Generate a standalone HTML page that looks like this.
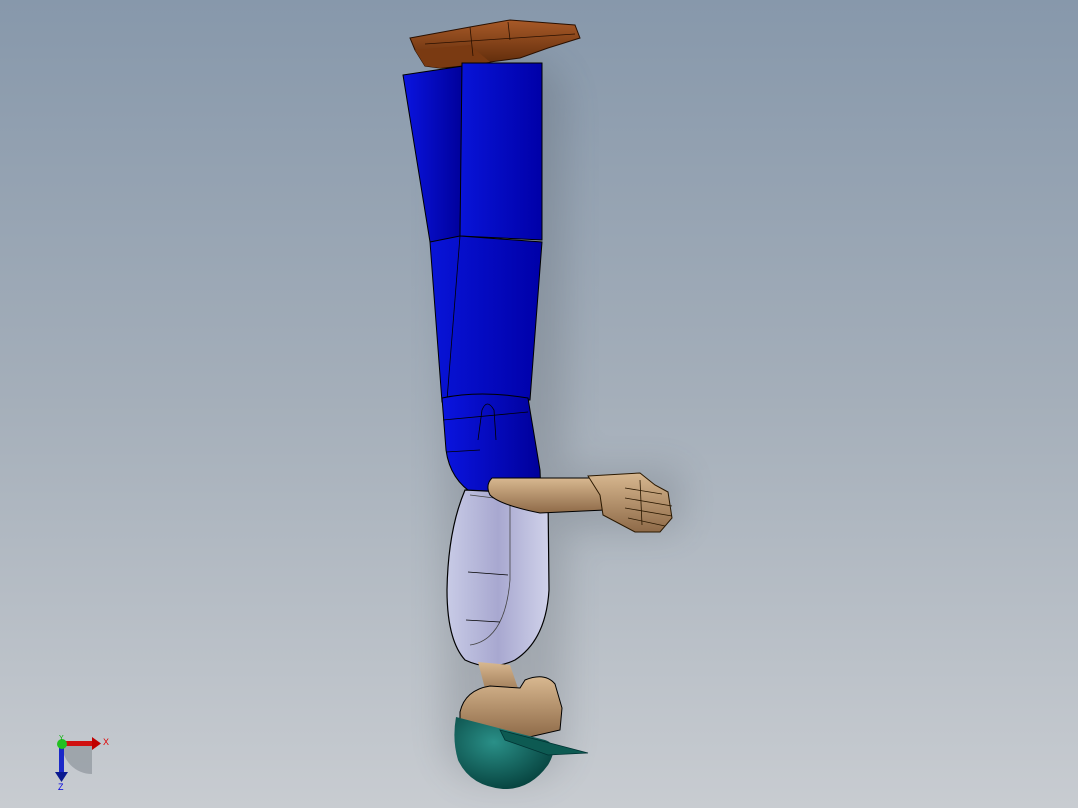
<!DOCTYPE html>
<html><head><meta charset="utf-8"><style>
html,body{margin:0;padding:0;width:1078px;height:808px;overflow:hidden}
body{background:linear-gradient(#8798ab 0%,#a5afba 50%,#c8ccd1 100%)}
</style></head><body>
<svg width="1078" height="808" viewBox="0 0 1078 808" xmlns="http://www.w3.org/2000/svg">
<defs>
<linearGradient id="blue" x1="0" x2="1"><stop offset="0" stop-color="#0a14e0"/><stop offset="1" stop-color="#00009a"/></linearGradient>
<linearGradient id="blue2" x1="0" x2="1"><stop offset="0" stop-color="#0814d8"/><stop offset="1" stop-color="#0000a8"/></linearGradient>
<linearGradient id="lav" x1="0" x2="1"><stop offset="0" stop-color="#c8cbe6"/><stop offset="0.5" stop-color="#a8a8d0"/><stop offset="1" stop-color="#d0d2ea"/></linearGradient>
<linearGradient id="tan" x1="0" y1="0" x2="0" y2="1"><stop offset="0" stop-color="#d8b890"/><stop offset="1" stop-color="#8e6a48"/></linearGradient>
<radialGradient id="teal" cx="0.4" cy="0.35" r="0.7"><stop offset="0" stop-color="#2a9088"/><stop offset="1" stop-color="#05403c"/></radialGradient>
<linearGradient id="brown" x1="0" y1="0" x2="0" y2="1"><stop offset="0" stop-color="#a85a28"/><stop offset="1" stop-color="#5a2808"/></linearGradient>
<filter id="sh" x="-50%" y="-20%" width="200%" height="140%"><feGaussianBlur stdDeviation="18"/></filter>
</defs>
<g opacity="0.18" filter="url(#sh)"><rect x="445" y="60" width="120" height="720" rx="40" fill="#303840"/><rect x="540" y="470" width="140" height="60" fill="#303840"/></g>
<!-- shoes -->
<polygon points="410,38 470,27 510,20 575,25 580,38 548,48 520,58 490,62 470,66 440,68 425,66 415,50" fill="url(#brown)" stroke="#2a1000" stroke-width="1"/>
<polygon points="415,50 470,45 490,62 440,68 425,66" fill="#7a3a12"/>
<line x1="425" y1="44" x2="575" y2="34" stroke="#2a1000" stroke-width="0.8"/>
<line x1="470" y1="27" x2="473" y2="56" stroke="#2a1000" stroke-width="0.8"/>
<line x1="508" y1="22" x2="510" y2="40" stroke="#2a1000" stroke-width="0.8"/>
<!-- legs -->
<polygon points="403,75 463,66 460,240 430,242" fill="url(#blue)" stroke="#000" stroke-width="1"/>
<polygon points="462,63 542,63 542,240 460,236" fill="url(#blue2)" stroke="#000" stroke-width="1"/>
<polygon points="430,242 460,236 542,242 530,400 442,402" fill="url(#blue2)" stroke="#000" stroke-width="1"/>
<line x1="460" y1="236" x2="447" y2="400" stroke="#000" stroke-width="0.8"/>
<!-- hips -->
<path d="M442,398 Q480,390 528,398 L540,470 L541,495 L475,495 Q450,480 446,450 Z" fill="url(#blue)" stroke="#000" stroke-width="1"/>
<path d="M478,440 L482,410 Q487,398 494,410 L496,440" fill="none" stroke="#000" stroke-width="0.8"/>
<line x1="443" y1="420" x2="528" y2="412" stroke="#000" stroke-width="0.8"/>
<line x1="446" y1="452" x2="480" y2="450" stroke="#000" stroke-width="0.8"/>
<!-- torso -->
<path d="M465,490 L548,494 L549,590 Q546,640 515,660 Q490,672 465,660 Q447,640 447,590 Q448,530 465,490 Z" fill="url(#lav)" stroke="#000" stroke-width="1.2"/>
<path d="M470,495 L510,500 L510,580 Q505,640 470,645" fill="none" stroke="#444" stroke-width="0.8"/>
<line x1="468" y1="572" x2="508" y2="575" stroke="#000" stroke-width="0.8"/>
<line x1="466" y1="620" x2="500" y2="622" stroke="#000" stroke-width="0.8"/>
<!-- arm -->
<path d="M492,478 L590,478 Q615,490 605,510 L540,513 Q500,505 490,495 Q485,485 492,478 Z" fill="url(#tan)" stroke="#000" stroke-width="1"/>
<path d="M588,476 L640,473 L655,485 L668,492 L672,518 L660,532 L635,532 L603,515 L600,495 Z" fill="url(#tan)" stroke="#2a1800" stroke-width="1"/>
<g stroke="#2a1800" stroke-width="0.8"><line x1="625" y1="488" x2="662" y2="494"/><line x1="625" y1="498" x2="672" y2="506"/><line x1="625" y1="508" x2="672" y2="516"/><line x1="628" y1="518" x2="665" y2="526"/><line x1="640" y1="480" x2="642" y2="525"/></g>
<!-- neck & head -->
<polygon points="478,662 510,665 522,700 488,700" fill="url(#tan)"/>
<path d="M460,712 Q465,690 490,686 L520,688 L525,680 Q545,672 555,684 L562,708 L560,730 L525,738 L460,725 Z" fill="url(#tan)" stroke="#000" stroke-width="1"/>
<!-- cap -->
<path d="M456,717 L545,740 Q560,745 548,765 Q530,790 503,789 Q470,786 458,760 Q452,740 456,717 Z" fill="url(#teal)"/>
<polygon points="500,730 588,753 548,755 505,740" fill="#0d5a52" stroke="#033" stroke-width="0.8"/>
<!-- axis triad -->
<path d="M62,744 A30,30 0 0 0 92,774 L92,744 Z" fill="#8f959c" opacity="0.7"/>
<rect x="62" y="741" width="30" height="5" fill="#d01010"/>
<polygon points="92,737 101,743.5 92,750" fill="#c00000"/>
<rect x="59" y="744" width="5" height="28" fill="#1a28c8"/>
<polygon points="55,772 68,772 61.5,782" fill="#0a1a90"/>
<circle cx="62" cy="744" r="5" fill="#22c022"/>
<text x="103" y="745" font-family="Liberation Sans, sans-serif" font-size="9" fill="#e00000">X</text>
<text x="58" y="790" font-family="Liberation Sans, sans-serif" font-size="9" fill="#0000e0">Z</text>
<text x="59" y="740" font-family="Liberation Sans, sans-serif" font-size="7" fill="#00b000">Y</text>
</svg>
</body></html>
